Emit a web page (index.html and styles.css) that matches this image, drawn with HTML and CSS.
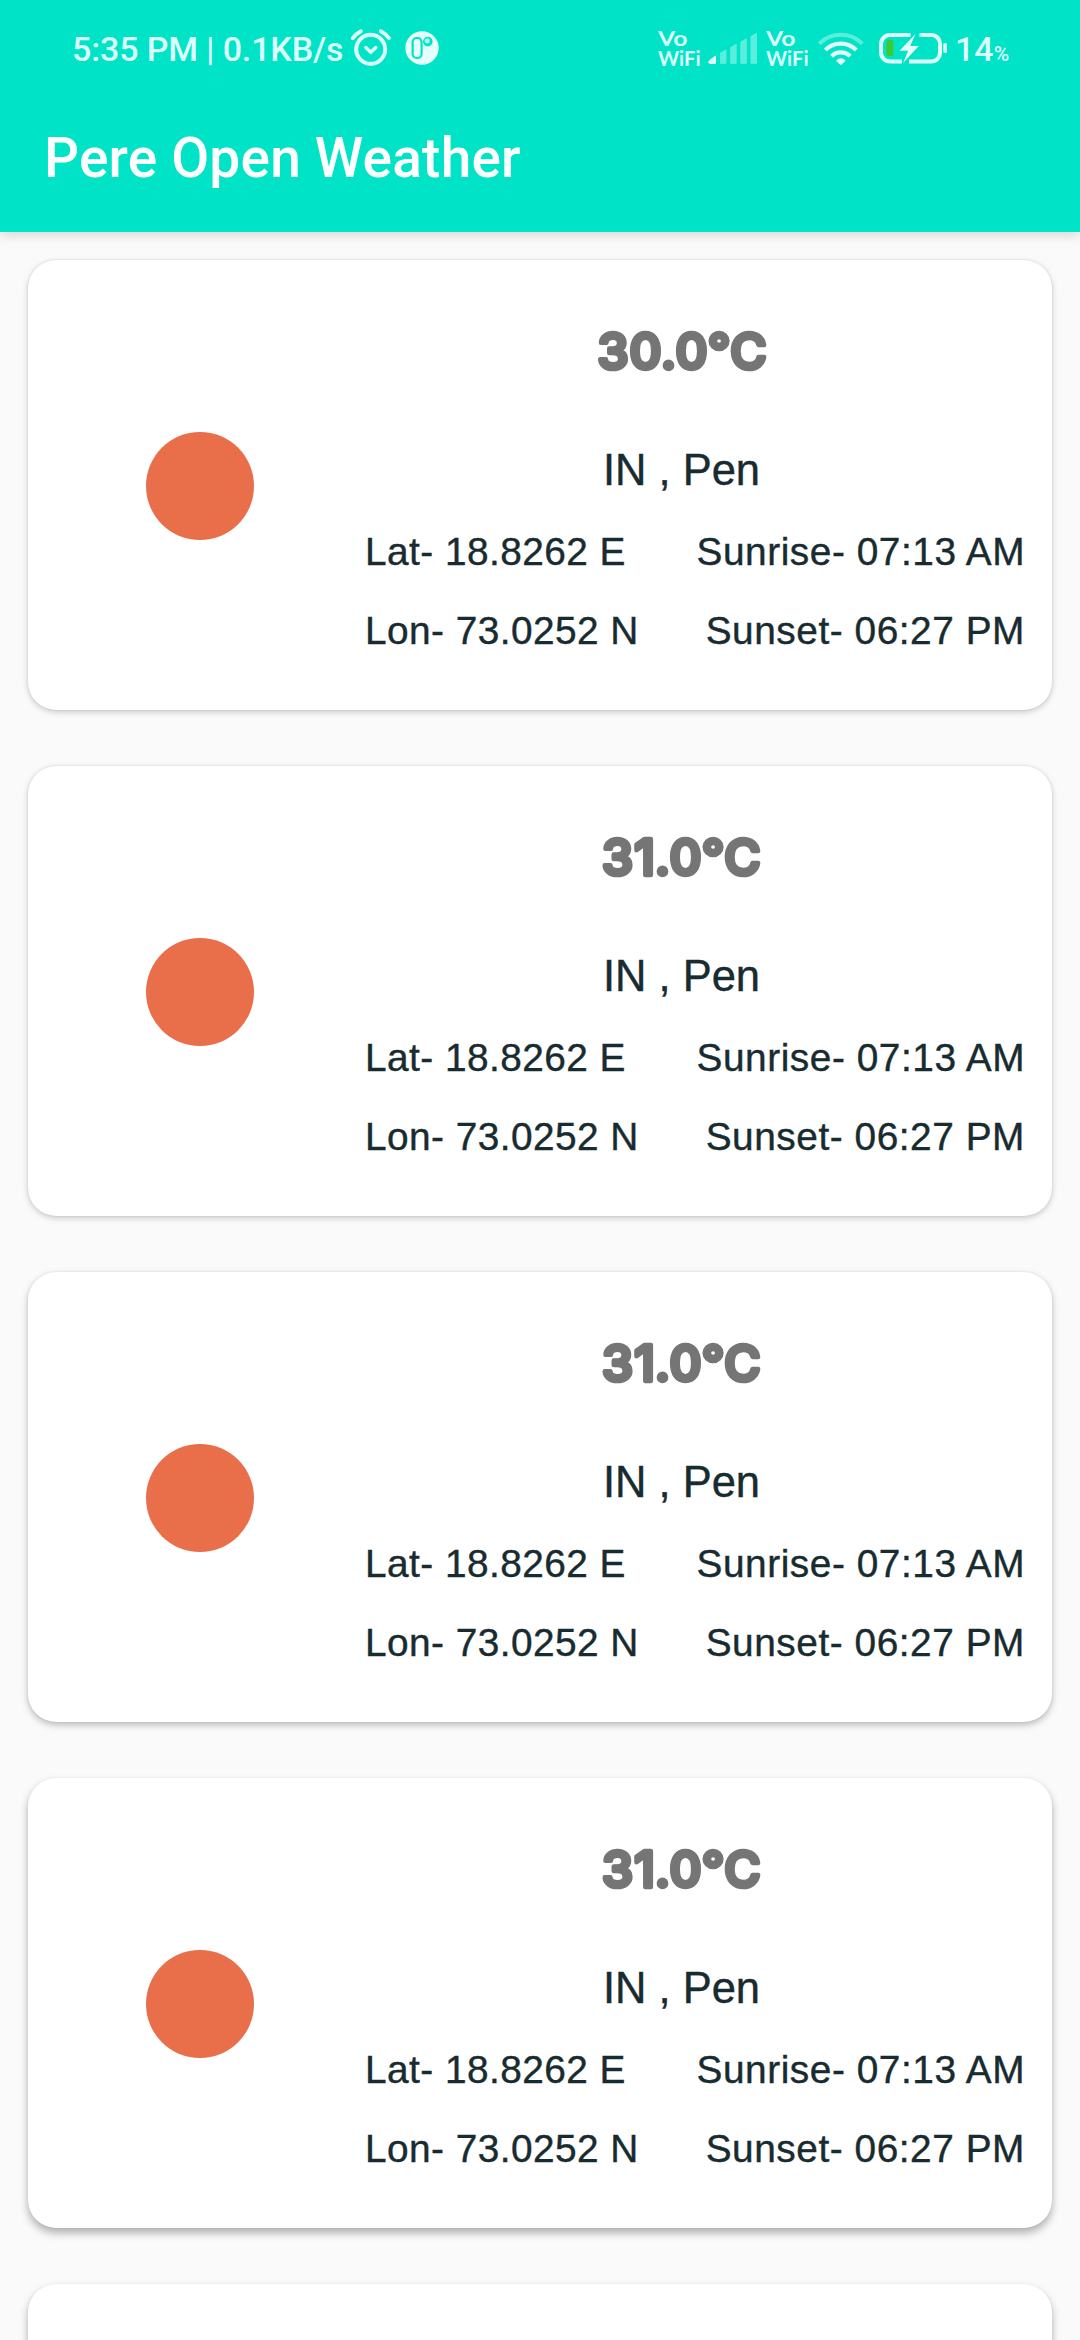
FILE: index.html
```html
<!DOCTYPE html>
<html lang="en">
<head>
<meta charset="utf-8">
<title>Pere Open Weather</title>
<link rel="stylesheet" href="styles.css">
</head>
<body>
<header class="header">
  <div class="status">
    <div class="status-group">
      <span class="clock">5:35 PM | 0.1KB/s</span>
      <svg class="icon" width="52" height="92" viewBox="346 0 52 92" fill="none" stroke="#dcfffb" stroke-linecap="round" stroke-linejoin="round">
        <circle cx="370.7" cy="49.3" r="14.5" stroke-width="4"/>
        <path d="M365.8 47.5l5 4.8 5-4.8" stroke-width="3.4"/>
        <path d="M352.7 38.2q3.4-4.6 8.2-7M389 38.2q-3.4-4.6-8.2-7" stroke-width="3.8"/>
      </svg>
      <svg class="icon" width="42" height="92" viewBox="400 0 42 92">
        <circle cx="422" cy="48" r="16.7" fill="#e4fffc"/>
        <rect x="412.6" y="38" width="9" height="20" rx="4" fill="none" stroke="#00e3c7" stroke-width="2.2"/>
        <circle cx="427.8" cy="41.6" r="4.8" fill="#00e3c7"/>
        <circle cx="427.2" cy="40.8" r="2.6" fill="#a8f6ec"/>
      </svg>
    </div>
    <div class="status-group">
      <svg class="icon" width="50" height="92" viewBox="654 0 50 92" fill="#dcfffb">
        <text class="vo" x="657" y="45.5" textLength="29.5" lengthAdjust="spacingAndGlyphs">Vo</text>
        <text class="vo" x="657" y="66.3" textLength="42.5" lengthAdjust="spacingAndGlyphs">WiFi</text>
      </svg>
      <svg class="icon" width="56" height="92" viewBox="704 0 56 92">
        <path d="M708.5 60.5l6-4.5v7.5h-4.900c-2 0-2.500-1.800-1.100-3z" fill="#e4fffc" stroke="#e4fffc" stroke-width="1" stroke-linejoin="round"/>
        <path d="M719.5 53l5.5-3v13.3h-5.5zM729.7 47.5l5.5-3.2v19h-5.5zM739.8 42l5.5-3.2v24.500h-5.5zM750 36.500l5.500-3.200v30h-5.500z" fill="#5beedd" stroke="#5beedd" stroke-linejoin="round"/>
      </svg>
      <svg class="icon" width="50" height="92" viewBox="762 0 50 92" fill="#dcfffb">
        <text class="vo" x="765" y="45.5" textLength="29.5" lengthAdjust="spacingAndGlyphs">Vo</text>
        <text class="vo" x="765" y="66.3" textLength="42.5" lengthAdjust="spacingAndGlyphs">WiFi</text>
      </svg>
      <svg class="icon" width="58" height="92" viewBox="812 0 58 92" fill="none" stroke-width="4">
        <path d="M818.2 43.7a30.5 30.5 0 0 1 43.2 0" stroke="#5beedd"/>
        <path d="M824.3 50a22 22 0 0 1 31 0M830.5 56.2a13.2 13.2 0 0 1 18.600 0" stroke="#e4fffc" stroke-width="4.2"/>
        <path d="M836 60.7q3.800-3.400 7.700 0l-3.800 3.600z" fill="#e4fffc" stroke="#e4fffc" stroke-width="1.5" stroke-linejoin="round"/>
      </svg>
      <svg class="icon" width="80" height="92" viewBox="874 0 80 92">
        <path d="M909.5 35H889a9 9 0 0 0-9 9v8.5a9 9 0 0 0 9 9h12M918.5 35h12a8.5 8.5 0 0 1 8.5 8.5v9.5a8.5 8.5 0 0 1-8.5 8.5h-22.5" fill="none" stroke="#dcfffb" stroke-width="4"/>
        <path d="M914.5 34l-16 16.800h8.800l-5.300 12.200 15.800-17h-8.600z" fill="#e4fffc"/>
        <rect x="885.3" y="40" width="7" height="16" rx="2.5" fill="#40c82c"/>
        <rect x="942.3" y="43" width="3.6" height="10" rx="1.5" fill="#dcfffb"/>
      </svg>
      <span class="level">14<small class="percent">%</small></span>
    </div>
  </div>
  <h1 class="title">Pere Open Weather</h1>
</header>
<main class="list">
  <article class="card">
    <div class="sun"></div>
    <div class="body">
      <svg class="temp" viewBox="580 310 202 82"><text y="368.5" x="612 644.5 667.5 690.5 718 747.5">30.0°C</text></svg>
      <p class="place">IN , Pen</p>
      <div class="row"><span>Lat- 18.8262 E</span><span class="sun-time">Sunrise- 07:13 AM</span></div>
      <div class="row"><span>Lon- 73.0252 N</span><span class="sun-time">Sunset- 06:27 PM</span></div>
    </div>
  </article>
  <article class="card">
    <div class="sun"></div>
    <div class="body">
      <svg class="temp" viewBox="580 310 202 82"><text y="368.5" x="616.5 643.5 661.5 684.5 712 741.5">31.0°C</text></svg>
      <p class="place">IN , Pen</p>
      <div class="row"><span>Lat- 18.8262 E</span><span class="sun-time">Sunrise- 07:13 AM</span></div>
      <div class="row"><span>Lon- 73.0252 N</span><span class="sun-time">Sunset- 06:27 PM</span></div>
    </div>
  </article>
  <article class="card card-mid">
    <div class="sun"></div>
    <div class="body">
      <svg class="temp" viewBox="580 310 202 82"><text y="368.5" x="616.5 643.5 661.5 684.5 712 741.5">31.0°C</text></svg>
      <p class="place">IN , Pen</p>
      <div class="row"><span>Lat- 18.8262 E</span><span class="sun-time">Sunrise- 07:13 AM</span></div>
      <div class="row"><span>Lon- 73.0252 N</span><span class="sun-time">Sunset- 06:27 PM</span></div>
    </div>
  </article>
  <article class="card card-low">
    <div class="sun"></div>
    <div class="body">
      <svg class="temp" viewBox="580 310 202 82"><text y="368.5" x="616.5 643.5 661.5 684.5 712 741.5">31.0°C</text></svg>
      <p class="place">IN , Pen</p>
      <div class="row"><span>Lat- 18.8262 E</span><span class="sun-time">Sunrise- 07:13 AM</span></div>
      <div class="row"><span>Lon- 73.0252 N</span><span class="sun-time">Sunset- 06:27 PM</span></div>
    </div>
  </article>
  <article class="card card-low"></article>
</main>
</body>
</html>
```
FILE: styles.css
```css
* { box-sizing: border-box; }
body {
  margin: 0;
  width: 1080px;
  height: 2340px;
  overflow: hidden;
  background: #fafafa;
  font-family: "Liberation Sans", Arial, sans-serif;
  color: #182b30;
}
.header {
  height: 232px;
  background: #00e3c7;
  box-shadow: 0 2px 12px rgba(0, 0, 0, .17);
}
.status {
  height: 92px;
  display: flex;
  justify-content: space-between;
  padding: 0 70px 0 72px;
  font-family: Roboto, sans-serif;
  color: #dcfffb;
}
.status-group { display: flex; }
.icon { display: block; flex: none; }
.icon + .icon { margin-left: 2px; }
.status-group:last-child .icon + .icon { margin-left: 0; }
.status-group:last-child .icon:nth-child(2) { margin-right: 2px; }
.status-group:last-child .icon:nth-child(4) { margin-right: 4px; }
.clock {
  width: 274px;
  font-size: 34px;
  font-weight: 500;
  line-height: 98px;
  letter-spacing: -.15px;
  white-space: nowrap;
}
.vo {
  font: 700 21px Lato, sans-serif;
}
.level {
  width: 55px;
  font-size: 34px;
  font-weight: 500;
  line-height: 98px;
  white-space: nowrap;
}
.percent { font-size: 21px; }
.title {
  margin: 0;
  padding: 1px 0 0 44px;
  font: 500 55px/130px Roboto, sans-serif;
  letter-spacing: .2px;
  color: #fff;
  white-space: nowrap;
}
.list {
  display: flex;
  flex-direction: column;
  gap: 56px;
  height: 2108px;
  overflow: hidden;
  padding: 28px;
}
.card {
  flex: none;
  height: 450px;
  display: flex;
  align-items: center;
  border-radius: 28px;
  background: #fff;
  box-shadow: 0 2px 6px rgba(0, 0, 0, .2), 0 0 2px rgba(0, 0, 0, .1);
}
.card-mid { box-shadow: 0 3px 7px rgba(0, 0, 0, .26), 0 0 2px rgba(0, 0, 0, .08); }
.card-low { box-shadow: 0 5px 9px rgba(0, 0, 0, .3), 0 0 2px rgba(0, 0, 0, .07); }
.sun {
  flex: none;
  width: 108px;
  height: 108px;
  margin: 1px 84px 0 118px;
  border-radius: 50%;
  background: #e96f4a;
}
.body {
  flex: none;
  width: 687px;
  height: 450px;
  padding-top: 50px;
}
.temp {
  display: block;
  width: 202px;
  height: 82px;
  margin: 0 auto;
  font: 500 49.5px Inter, sans-serif;
  text-anchor: middle;
  fill: #757575;
  stroke: #757575;
  stroke-width: 4.6px;
  stroke-linejoin: round;
}
.place {
  margin: 53px 0 0;
  height: 82px;
  font-size: 43.5px;
  line-height: 50px;
  text-align: center;
  -webkit-text-stroke: .4px #182b30;
}
.row {
  height: 79px;
  display: flex;
  justify-content: space-between;
  padding-left: 27px;
  font-size: 38.8px;
  line-height: 50px;
  letter-spacing: .45px;
  -webkit-text-stroke: .4px #182b30;
}
.sun-time { letter-spacing: .55px; }
```
